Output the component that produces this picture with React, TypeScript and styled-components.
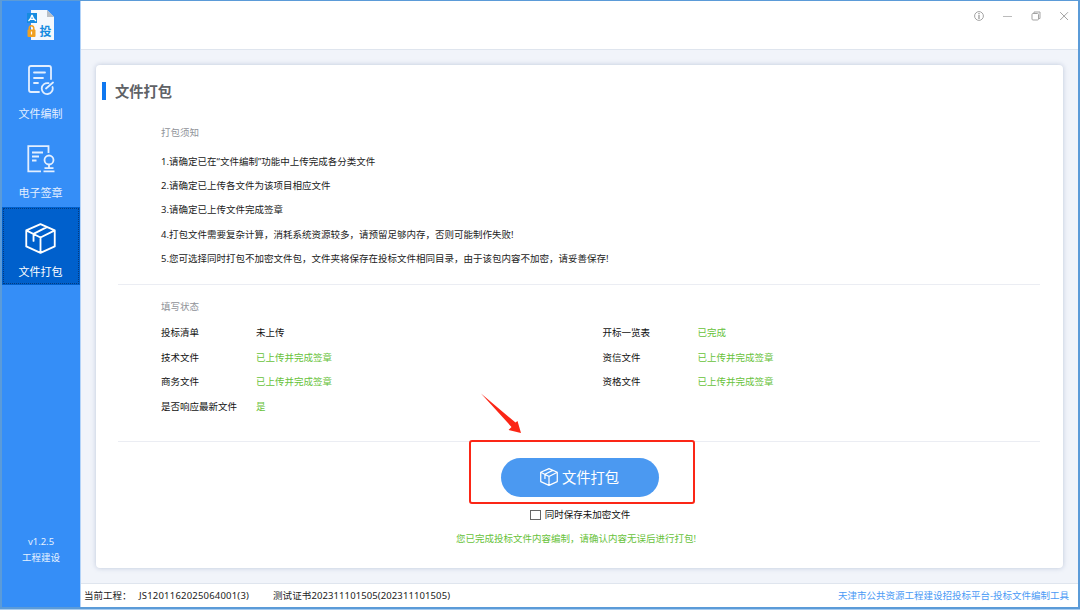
import React from 'react';
import styled, { createGlobalStyle } from 'styled-components';

const Global = createGlobalStyle`
  * { box-sizing: border-box; }
  body { margin: 0; background: #a9cdf0; font-family: "Noto Sans", "Noto Sans CJK SC", sans-serif; color: #222; font-size: 9.5px; }
  ul, h1, h2, p { margin: 0; padding: 0; font: inherit; list-style: none; }
  button { font: inherit; border: 0; padding: 0; background: none; color: inherit; }
`;

const Window = styled.div`
  position: relative;
  display: flex;
  width: 1080px;
  height: 609px;
  border: solid #5b9bd8;
  border-width: 1px 2px 2px 2px;
  background: #fff;
  white-space: nowrap;
`;

const Sidebar = styled.nav`
  width: 79px;
  flex: none;
  display: flex;
  flex-direction: column;
  align-items: stretch;
  background: #358ef7;
  border-right: 1px solid #b3d3f8;
  color: #e6f1ff;
`;

const Logo = styled.div`
  height: 48px;
  padding: 8px 0 0 24px;
`;

const NavItem = styled.button<{ $active?: boolean }>`
  height: ${p => (p.$active ? 78 : 79)}px;
  display: flex;
  flex-direction: column;
  align-items: center;
  padding-top: 14px;
  padding-right: 1px;
  font-size: 11px;
  line-height: 16px;
  color: ${p => (p.$active ? '#fff' : '#e3efff')};
  background: ${p => (p.$active ? '#0060cc' : 'transparent')};
  outline: ${p => (p.$active ? '1px dotted #063a7c' : 'none')};
  outline-offset: -2px;
`;

const IconSlot = styled.span`
  display: flex;
  align-items: center;
  height: 34px;
  margin-bottom: 9px;
`;

const Version = styled.div`
  margin-top: auto;
  padding-bottom: 41px;
  text-align: center;
  font-size: 9.5px;
  line-height: 16px;
`;

const Main = styled.div`
  flex: 1;
  min-width: 0;
  display: flex;
  flex-direction: column;
`;

const TitleBar = styled.header`
  height: 49px;
  border-bottom: 1px solid #dfe5ee;
  display: flex;
  justify-content: flex-end;
  gap: 16px;
  padding: 9px 7.5px 0 0;
`;

const Content = styled.main`
  flex: 1;
  background: #f1f4fa;
  padding: 15px 15px 15px 15px;
  display: flex;
`;

const Card = styled.section`
  flex: 1;
  background: #fff;
  border-radius: 4px;
  box-shadow: 0 0 5px rgba(110, 130, 170, 0.4);
  padding-top: 17px;
`;

const Title = styled.h1`
  display: flex;
  align-items: center;
  height: 18px;
  margin-left: 6px;
  padding: 0 0 1px 9px;
  border-left: 4px solid #0f78f0;
  font-size: 14.25px;
  font-weight: 700;
  color: #606266;
`;

const Section = styled.div`
  margin: 0 23px 0 22px;
  padding: 0 0 0 43px;
  border-bottom: 1px solid #ebedf3;
`;

const Notes = styled(Section)`
  height: 185px;
  padding-top: 24px;
`;

const Status = styled(Section)`
  height: 157px;
  padding-top: 13px;
`;

const Caption = styled.h2`
  line-height: 18px;
  color: #909399;
`;

const NoteList = styled.ul`
  margin-top: 7.5px;
  line-height: 24.4px;
`;

const Grid = styled.div`
  display: grid;
  grid-template-columns: 95px 346.5px 95px 1fr;
  grid-auto-rows: 24.5px;
  align-items: center;
  margin-top: 4px;
  color: #111;
`;

const Value = styled.span<{ $done?: boolean }>`
  color: ${p => (p.$done ? '#67c23a' : '#111')};
`;

const Actions = styled.div`
  display: flex;
  flex-direction: column;
  align-items: center;
  width: 226px;
  margin-left: 373px;
`;

const Highlight = styled.div`
  width: 226px;
  height: 64px;
  margin-top: -2px;
  border: 2px solid #fb2616;
  border-radius: 3px;
  padding: 16px 0 0 29.5px;
  position: relative;
`;

const PackButton = styled.button`
  display: flex;
  align-items: center;
  justify-content: center;
  gap: 4px;
  width: 158px;
  height: 39px;
  padding-bottom: 2px;
  border-radius: 20px;
  background: #4b99f1;
  color: #fff;
  font-size: 14.3px;
`;

const Arrow = styled.svg`
  position: absolute;
  left: 8.5px;
  top: -50px;
`;

const CheckRow = styled.label`
  display: flex;
  align-items: center;
  gap: 4px;
  height: 20px;
  margin-left: -4px;
  color: #111;
`;

const Box = styled.span`
  width: 11px;
  height: 10px;
  margin-top: 1px;
  border: 1px solid #666;
`;

const Message = styled.p`
  margin: 6px 0 0 -12px;
  line-height: 18px;
  color: #67c23a;
`;

const Footer = styled.footer`
  height: 24px;
  border-top: 1px solid #dfe5ee;
  display: flex;
  align-items: center;
  padding: 0 9px 1px 3px;
  color: #222;
`;

const Field = styled.span<{ $width: number }>`
  width: ${p => p.$width}px;
`;

const Code = styled.span`
  letter-spacing: 0.2px;
`;

const Certificate = styled.span`
  letter-spacing: 0.1px;
`;

const Platform = styled.span`
  margin-left: auto;
  color: #4a9af5;
`;

const BoxIcon = ({ size, width }: { size: number; width: number }) => (
  <svg width={size} height={size} viewBox="0 0 32 32" fill="none" stroke="currentColor" strokeWidth={width} strokeLinejoin="round" strokeLinecap="round">
    <path d="M16 1.2 30.7 7.6V24.2L16 30.8 1.3 24.2V7.6ZM1.3 7.6 16 15 30.7 7.6M16 15V30.8M22.5 4.2 8.8 11.2V18.5" />
  </svg>
);

const EditIcon = () => (
  <svg width="28" height="30" viewBox="0 0 28 30" fill="none" stroke="currentColor" strokeWidth="1.8" strokeLinecap="round" strokeLinejoin="round">
    <path d="M12 27H4Q2 27 2 25V3Q2 1 4 1H22Q24 1 24 3V14M7 7.5H18M7 13H16M7 18H11M21.5 18.2A5.5 5.5 0 1 0 25.5 22M19 23.5 26 17.5" />
  </svg>
);

const SealIcon = () => (
  <svg width="28" height="30" viewBox="0 0 28 30" fill="none" stroke="currentColor" strokeWidth="1.8">
    <path d="M14 27.3H1.3V2.2H21.5V9M5 8.5H16M5 12.5H12M5 16.5H9.5M16.5 27.3H27.5M17.5 24.2H26.5M22 20.5V24" />
    <circle cx="22" cy="16" r="4.5" />
  </svg>
);

const DocLogo = () => (
  <svg width="30" height="32" viewBox="0 0 30 32">
    <path d="M5 1H21L28 8V31H5Z" fill="#f4f8fd" />
    <path d="M21 1 28 8H21Z" fill="#b9bfc6" />
    <rect x="1" y="4" width="10" height="10" fill="#168be0" />
    <path d="M2.5 12Q5 10 6 6Q7 10 10 12M4 10.3H8.5" fill="none" stroke="#fff" strokeWidth="1.3" />
    <path d="M3.2 21V19.5A2.3 2.8 0 0 1 7.8 19.5V21" fill="none" stroke="#f0a020" strokeWidth="1.5" />
    <rect x="1.5" y="20.5" width="8" height="7.5" rx="1" fill="#f0a020" />
    <path d="M5.5 22.5V25.5" stroke="#fff" strokeWidth="1.2" />
    <text x="13.5" y="26.8" fontSize="12" fontWeight="700" fill="#168be0">投</text>
  </svg>
);

const WindowButton = ({ children }: { children: React.ReactNode }) => (
  <svg width="12.4" height="12" viewBox="0 0 12.4 12" fill="none" stroke="#a3a3a3" strokeWidth="1">{children}</svg>
);

const notes = [
  '1.请确定已在“文件编制”功能中上传完成各分类文件',
  '2.请确定已上传各文件为该项目相应文件',
  '3.请确定已上传文件完成签章',
  '4.打包文件需要复杂计算，消耗系统资源较多，请预留足够内存，否则可能制作失败!',
  '5.您可选择同时打包不加密文件包，文件夹将保存在投标文件相同目录，由于该包内容不加密，请妥善保存!',
];

const statuses: [string, string, boolean][] = [
  ['投标清单', '未上传', false],
  ['开标一览表', '已完成', true],
  ['技术文件', '已上传并完成签章', true],
  ['资信文件', '已上传并完成签章', true],
  ['商务文件', '已上传并完成签章', true],
  ['资格文件', '已上传并完成签章', true],
  ['是否响应最新文件', '是', true],
];

export default function App() {
  return (
    <>
      <Global />
      <Window lang="zh-CN">
        <Sidebar>
          <Logo><DocLogo /></Logo>
          <NavItem><IconSlot><EditIcon /></IconSlot>文件编制</NavItem>
          <NavItem><IconSlot><SealIcon /></IconSlot>电子签章</NavItem>
          <NavItem $active><IconSlot><BoxIcon size={31} width={1.9} /></IconSlot>文件打包</NavItem>
          <Version>v1.2.5<br />工程建设</Version>
        </Sidebar>
        <Main>
          <TitleBar>
            <WindowButton><circle cx="6" cy="6" r="4.4" /><path d="M6 5V9M6 3V4.2" strokeWidth="1.4" /></WindowButton>
            <WindowButton><path d="M2 6.5H11" stroke="#bbb" /></WindowButton>
            <WindowButton><rect x="2" y="3.5" width="6.5" height="6.5" rx="1" /><path d="M4 3V2H10V8.5H9" /></WindowButton>
            <WindowButton><path d="M2.2 2.2 10 10M10 2.2 2.2 10" /></WindowButton>
          </TitleBar>
          <Content>
            <Card>
              <Title>文件打包</Title>
              <Notes>
                <Caption>打包须知</Caption>
                <NoteList>{notes.map(n => <li key={n}>{n}</li>)}</NoteList>
              </Notes>
              <Status>
                <Caption>填写状态</Caption>
                <Grid>
                  {statuses.map(([name, value, done]) => (
                    <React.Fragment key={name}>
                      <span>{name}</span>
                      <Value $done={done}>{value}</Value>
                    </React.Fragment>
                  ))}
                </Grid>
              </Status>
              <Actions>
                <Highlight>
                  <PackButton><BoxIcon size={18} width={2.2} />文件打包</PackButton>
                  <Arrow width="44" height="42" viewBox="0 0 44 42">
                    <path d="M1 1.5 35.5 30.5 37.5 29 41 41 28.5 38 31.5 35Z" fill="#fb2616" />
                  </Arrow>
                </Highlight>
                <CheckRow><Box />同时保存未加密文件</CheckRow>
                <Message>您已完成投标文件内容编制，请确认内容无误后进行打包!</Message>
              </Actions>
            </Card>
          </Content>
          <Footer>
            <Field $width={55}>当前工程：</Field>
            <Field $width={134}><Code>JS1201162025064001(3)</Code></Field>
            <Certificate>测试证书202311101505(202311101505)</Certificate>
            <Platform>天津市公共资源工程建设招投标平台-投标文件编制工具</Platform>
          </Footer>
        </Main>
      </Window>
    </>
  );
}
